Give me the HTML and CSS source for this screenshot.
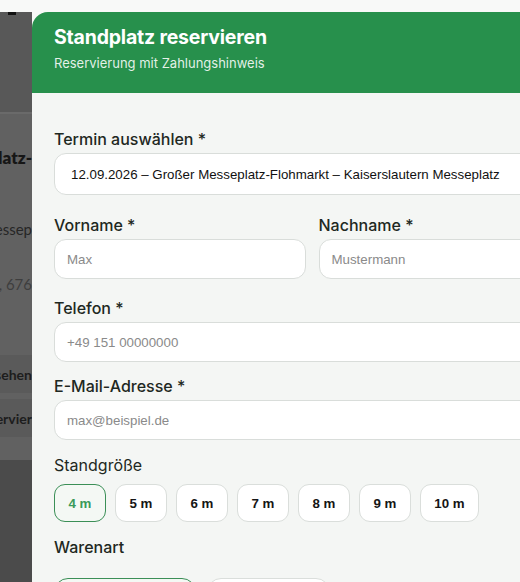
FILE: index.html
```html
<!DOCTYPE html>
<html lang="de">
<head>
<meta charset="utf-8">
<title>Standplatz reservieren</title>
<link rel="stylesheet" href="styles.css">
</head>
<body>
<div class="scene">
  <div class="peek">
    <div class="peek-top"><span class="peek-mark"></span></div>
    <div class="peek-head"></div>
    <div class="peek-card">
      <div class="peek-line peek-title">Standplatz-</div>
      <div class="peek-line peek-place">Kaiserslautern Messep</div>
      <div class="peek-line peek-addr">Messeplatz, 676</div>
      <div class="peek-btn peek-btn-1">Ansehen</div>
      <div class="peek-btn peek-btn-2">Reservier</div>
    </div>
    <div class="peek-foot"></div>
  </div>
  <div class="modal">
    <div class="modal-head">
      <h1 class="modal-title">Standplatz reservieren</h1>
      <p class="modal-sub">Reservierung mit Zahlungshinweis</p>
    </div>
    <div class="modal-body">
      <div class="field f-termin">
        <label class="label">Termin auswählen *</label>
        <div class="select">12.09.2026 – Großer Messeplatz-Flohmarkt – Kaiserslautern Messeplatz</div>
      </div>
      <div class="row f-name">
        <div class="field">
          <label class="label">Vorname *</label>
          <div class="input">Max</div>
        </div>
        <div class="field">
          <label class="label">Nachname *</label>
          <div class="input">Mustermann</div>
        </div>
      </div>
      <div class="field f-tel">
        <label class="label">Telefon *</label>
        <div class="input">+49 151 00000000</div>
      </div>
      <div class="field f-mail">
        <label class="label">E-Mail-Adresse *</label>
        <div class="input">max@beispiel.de</div>
      </div>
      <div class="field f-size">
        <label class="label label-light">Standgröße</label>
        <div class="chips">
          <button class="chip chip-active">4 m</button>
          <button class="chip">5 m</button>
          <button class="chip">6 m</button>
          <button class="chip">7 m</button>
          <button class="chip">8 m</button>
          <button class="chip">9 m</button>
          <button class="chip chip-wide">10 m</button>
        </div>
      </div>
      <div class="field f-ware">
        <label class="label">Warenart</label>
        <div class="ware">
          <button class="ware-btn ware-active">Privat / Trödel</button>
          <button class="ware-btn ware-second">Gewerblich</button>
        </div>
      </div>
    </div>
  </div>
</div>
</body>
</html>
```
FILE: styles.css
```css
* { box-sizing: border-box; }
html, body { margin: 0; padding: 0; }
body {
  width: 520px;
  height: 582px;
  overflow: hidden;
  background: #f8f9f8;
  font-family: "Inter", "Liberation Sans", sans-serif;
}
.scene {
  display: flex;
  padding-top: 12px;
  height: 582px;
}
.peek {
  width: 32px;
  flex-shrink: 0;
  display: flex;
  flex-direction: column;
  background: #4b4b4b;
  overflow: hidden;
}
.peek > * { flex-shrink: 0; }
.peek-top {
  height: 0;
  position: relative;
}
.peek-mark {
  position: absolute;
  left: 8px;
  top: 0;
  width: 8px;
  height: 3px;
  background: #111;
}
.peek-head {
  height: 102px;
  background: #585858;
  border-bottom: 2px solid #6a6a6a;
}
.peek-card {
  background: #616161;
  display: flex;
  flex-direction: column;
  height: 346px;
  padding-top: 33px;
}
.peek-card > * { flex-shrink: 0; }
.peek-line {
  display: flex;
  justify-content: flex-end;
  white-space: nowrap;
  font-family: "Lato", "Liberation Sans", sans-serif;
}
.peek-title {
  font-weight: 800;
  font-size: 17px;
  color: #161616;
  height: 22px;
}
.peek-place {
  font-size: 15px;
  color: #262626;
  margin-top: 51px;
  height: 20px;
}
.peek-addr {
  font-size: 15px;
  color: #3e3e3e;
  margin-top: 35px;
  height: 20px;
}
.peek-btn {
  display: flex;
  justify-content: flex-end;
  align-items: center;
  white-space: nowrap;
  height: 38px;
  background: #5a5a5a;
  font-family: "Lato", "Liberation Sans", sans-serif;
  font-weight: 700;
  font-size: 14px;
  color: #1d1d1d;
}
.peek-btn-1 { margin-top: 60px; }
.peek-btn-2 { margin-top: 6px; }
.peek-foot { flex: 1 0 auto; background: #4b4b4b; }

.modal {
  width: 560px;
  flex-shrink: 0;
  background: #f4f6f4;
  border-top-left-radius: 16px;
  overflow: hidden;
  display: flex;
  flex-direction: column;
}
.modal > * { flex-shrink: 0; }
.modal-head {
  background: #27904c;
  height: 81px;
  padding: 12px 22px 0;
  color: #fff;
}
.modal-title {
  margin: 0;
  font-size: 19.5px;
  font-weight: 700;
  line-height: 26px;
  letter-spacing: -0.2px;
}
.modal-sub {
  margin: 4px 0 0;
  font-size: 13px;
  line-height: 18px;
  color: rgba(255,255,255,0.88);
}
.modal-body {
  padding: 36px 22px 0 22px;
  display: flex;
  flex-direction: column;
}
.modal-body > * { flex-shrink: 0; }
.field {
  display: flex;
  flex-direction: column;
  flex: 1;
}
.label {
  font-size: 16px;
  font-weight: 500;
  line-height: 20px;
  color: #1e2822;
  margin-bottom: 4px;
}
.label-light { font-weight: 400; }
.select, .input {
  background: #fff;
  border: 1px solid #d9ddda;
  border-radius: 12px;
  font-family: "Liberation Sans", Arial, sans-serif;
  font-size: 13.3px;
  display: flex;
  align-items: center;
  white-space: nowrap;
}
.select {
  height: 42px;
  padding-left: 16px;
  color: #111;
}
.input {
  height: 40px;
  padding-left: 12px;
  color: #8a8a8a;
}
.row {
  display: flex;
  gap: 13px;
}
.f-name { margin-top: 20px; }
.f-tel { margin-top: 19px; }
.f-mail { margin-top: 14px; }
.f-size { margin-top: 15px; }
.f-size .label { margin-bottom: 9px; }
.chips {
  display: flex;
  gap: 9px;
}
.chip {
  width: 52px;
  height: 38px;
  border: 1px solid #dadedb;
  background: #fff;
  border-radius: 11px;
  font-family: "Liberation Sans", Arial, sans-serif;
  font-weight: 700;
  font-size: 13.3px;
  color: #151515;
  padding: 0;
}
.chip-wide { width: 59px; }
.chip-active {
  border-color: #3b8f57;
  background: #f4f8f4;
  color: #3a9a5a;
}
.f-ware { margin-top: 15px; }
.f-ware .label { margin-bottom: 21px; }
.ware {
  display: flex;
  gap: 11px;
}
.ware-btn {
  height: 44px;
  border: 1px solid #dadedb;
  background: #fff;
  border-radius: 14px;
  font-family: "Liberation Sans", Arial, sans-serif;
  font-weight: 700;
  font-size: 13px;
  color: #151515;
}
.ware-active {
  width: 142px;
  border-color: #3b8f57;
  background: #f4f8f4;
  color: #3a9a5a;
}
.ware-second { width: 123px; }
```
